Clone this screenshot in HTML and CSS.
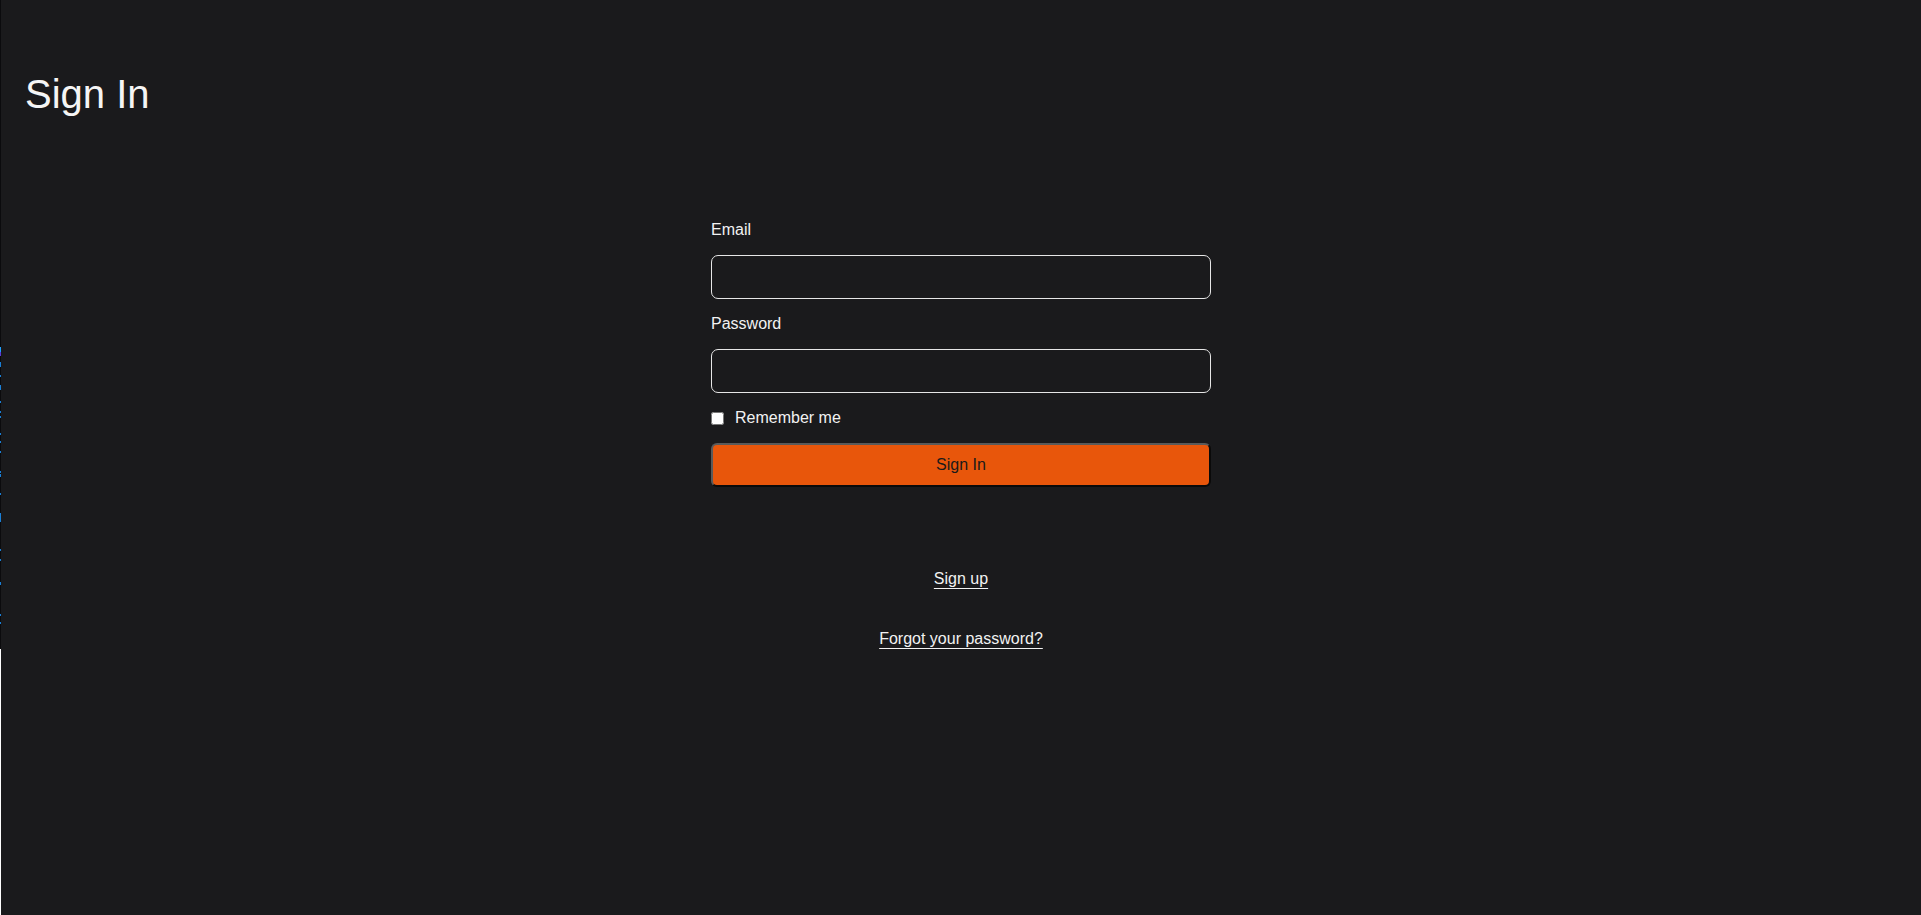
FILE: index.html
```html
<!DOCTYPE html>
<html lang="en">
<head>
<meta charset="utf-8">
<title>Sign In</title>
<link rel="stylesheet" href="styles.css">
</head>
<body>
<div class="app">
  <div class="edge">
    <svg class="edge-svg" width="1" height="649" viewBox="0 0 1 649" aria-hidden="true">
      <rect x="0" y="0" width="1" height="649" fill="#0b0b0d"/>
      <rect x="0" y="347" width="1" height="5" fill="#1ea0ff"/>
      <rect x="0" y="352" width="1" height="4" fill="#5a3ad8"/>
      <rect x="0" y="362" width="1" height="5" fill="#1a7fd6"/>
      <rect x="0" y="375" width="1" height="2" fill="#1a7fd6"/>
      <rect x="0" y="385" width="1" height="5" fill="#1a7fd6"/>
      <rect x="0" y="401" width="1" height="2" fill="#1a7fd6"/>
      <rect x="0" y="411" width="1" height="2" fill="#1a7fd6"/>
      <rect x="0" y="416" width="1" height="2" fill="#1a7fd6"/>
      <rect x="0" y="433" width="1" height="2" fill="#1a7fd6"/>
      <rect x="0" y="441" width="1" height="2" fill="#1a7fd6"/>
      <rect x="0" y="451" width="1" height="2" fill="#1a7fd6"/>
      <rect x="0" y="471" width="1" height="2" fill="#1a7fd6"/>
      <rect x="0" y="474" width="1" height="3" fill="#1a7fd6"/>
      <rect x="0" y="493" width="1" height="2" fill="#1a7fd6"/>
      <rect x="0" y="513" width="1" height="9" fill="#1a7fd6"/>
      <rect x="0" y="549" width="1" height="2" fill="#1a7fd6"/>
      <rect x="0" y="559" width="1" height="2" fill="#1a7fd6"/>
      <rect x="0" y="582" width="1" height="3" fill="#1a7fd6"/>
      <rect x="0" y="614" width="1" height="2" fill="#1a7fd6"/>
      <rect x="0" y="622" width="1" height="2" fill="#1a7fd6"/>
    </svg>
  </div>
  <main class="main">
    <h1 class="title">Sign In</h1>
    <form class="form">
      <div class="field">
        <label class="label" for="email">Email</label>
        <input class="input" id="email" type="email">
      </div>
      <div class="field">
        <label class="label" for="password">Password</label>
        <input class="input" id="password" type="password">
      </div>
      <label class="remember">
        <input class="check" type="checkbox">
        <span>Remember me</span>
      </label>
      <button class="submit" type="button">Sign In</button>
    </form>
    <nav class="links">
      <a class="link" href="#">Sign up</a>
      <a class="link" href="#">Forgot your password?</a>
    </nav>
  </main>
</div>
</body>
</html>
```
FILE: styles.css
```css
html, body {
  margin: 0;
  padding: 0;
  background: #ffffff;
}

body {
  font-family: "Liberation Sans", Arial, sans-serif;
  color: #f2f2f2;
}

.app {
  display: flex;
  min-height: 100vh;
}

.edge {
  width: 1px;
  flex: 0 0 1px;
  align-self: flex-start;
  background: #ffffff;
}

.edge-svg {
  display: block;
}

.main {
  flex: 1;
  background: #1a1a1c;
  min-height: 100vh;
  padding: 72px 24px 0;
  box-sizing: border-box;
}

.title {
  margin: 0;
  font-size: 40px;
  font-weight: 400;
  line-height: normal;
  color: #f5f5f5;
}

.form {
  width: 500px;
  margin: 103px auto 0;
  display: flex;
  flex-direction: column;
  gap: 15px;
}

.field {
  display: flex;
  flex-direction: column;
  gap: 15px;
}

.label {
  font-size: 16px;
  line-height: 20px;
  color: #f2f2f2;
}

.input {
  height: 44px;
  box-sizing: border-box;
  border: 1px solid #e6e6e6;
  border-radius: 7px;
  background: transparent;
  color: #f2f2f2;
  font: 16px "Liberation Sans", Arial, sans-serif;
  padding: 0 12px;
  margin: 0;
  outline: none;
}

.remember {
  display: flex;
  align-items: center;
  gap: 11px;
  font-size: 16px;
  line-height: 20px;
  color: #f2f2f2;
}

.check {
  width: 13px;
  height: 13px;
  margin: 0;
}

.submit {
  height: 44px;
  box-sizing: border-box;
  border: 2px solid;
  border-color: #5a5a5a #0a0a0a #0a0a0a #5a5a5a;
  border-radius: 6px;
  background: #e8560b;
  color: #1a1a1a;
  font: 16px "Liberation Sans", Arial, sans-serif;
  margin: 0;
  padding: 0;
  cursor: pointer;
}

.links {
  display: flex;
  flex-direction: column;
  align-items: center;
  gap: 40px;
  margin-top: 82px;
}

.link {
  font-size: 16px;
  line-height: 20px;
  color: #f2f2f2;
  text-decoration: underline;
  text-underline-offset: 4px;
}
```
